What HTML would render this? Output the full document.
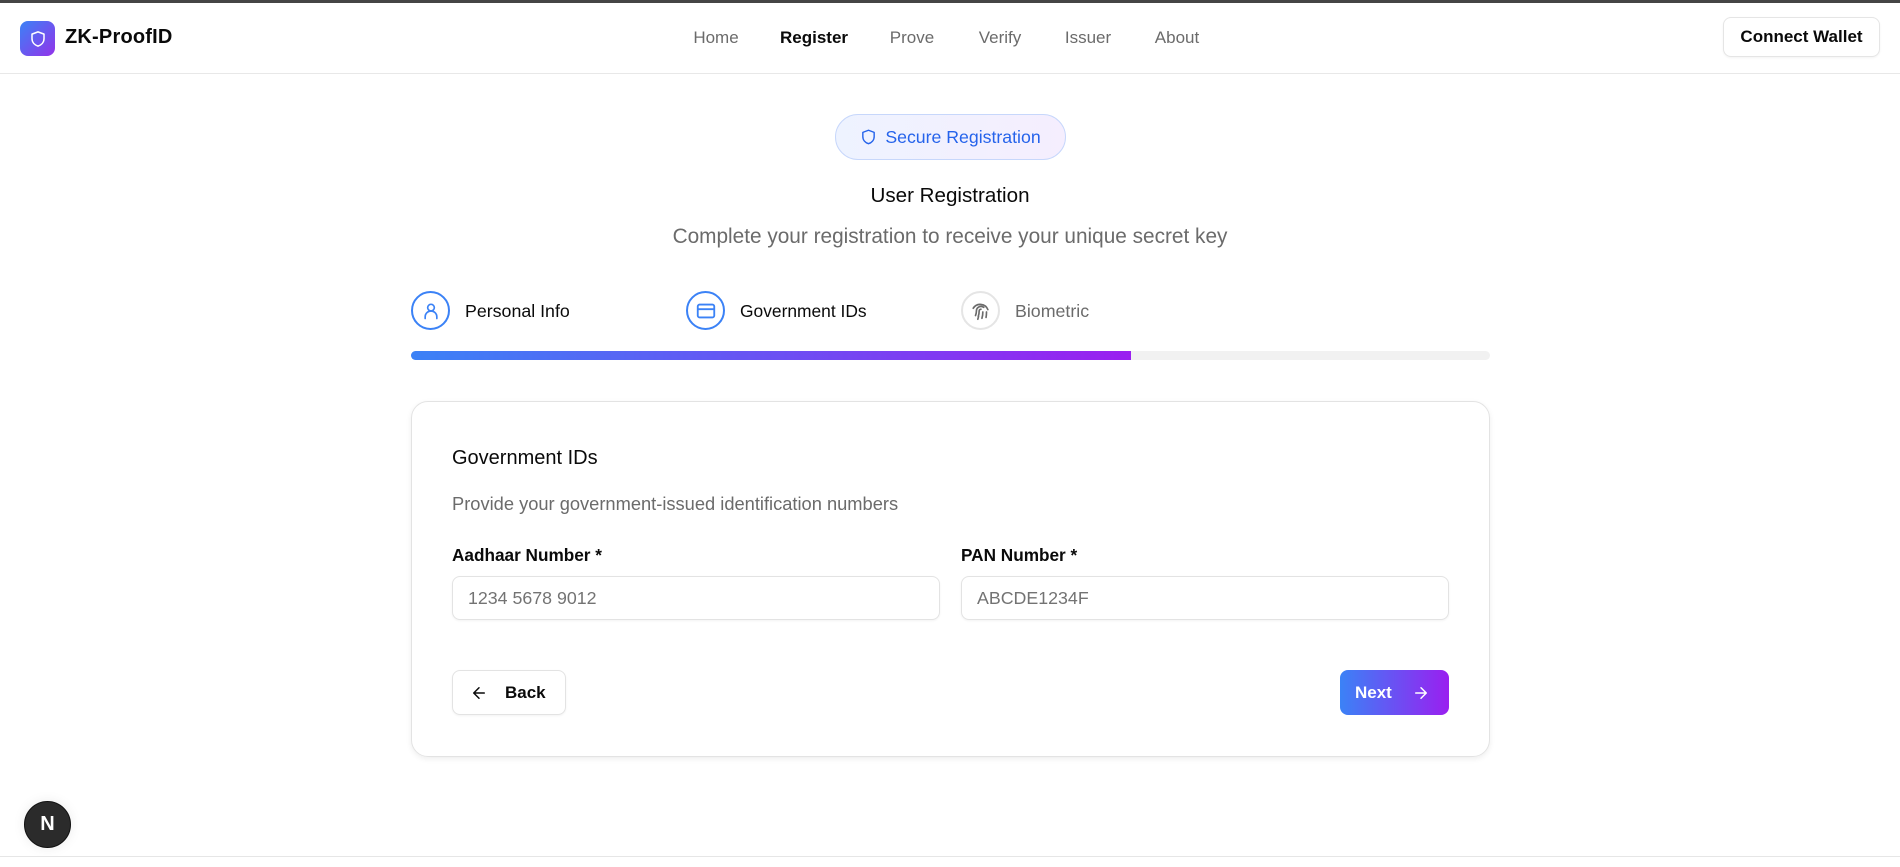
<!DOCTYPE html>
<html><head><meta charset="utf-8"><style>
*{box-sizing:border-box;margin:0;padding:0}
body{width:1900px;height:867px;overflow:hidden;background:#fff;font-family:"Liberation Sans",sans-serif;color:#0a0a0a;position:relative}
.abs{position:absolute}
.topbar{left:0;top:0;width:1900px;height:3px;background:#454545}
.hdr{left:0;top:3px;width:1900px;height:71px;border-bottom:1px solid #e8e8e8}
.logo{left:20px;top:21px;width:35px;height:35px;border-radius:8px;background:linear-gradient(135deg,#3b82f6,#9333ea);display:flex;align-items:center;justify-content:center}
.brand{left:65px;top:26px;font-size:20px;font-weight:700;letter-spacing:.2px}
.nav{top:28px;font-size:17px;color:#6b6b6b;transform:translateX(-50%)}
.cw{left:1723px;top:17px;width:157px;height:40px;border:1px solid #e5e5e5;border-radius:8px;font-size:17px;font-weight:700;display:flex;align-items:center;justify-content:center;box-shadow:0 1px 2px rgba(0,0,0,.05)}
.badge{left:835px;top:114px;width:231px;height:46px;border-radius:23px;border:1px solid #c7d7fb;background:linear-gradient(90deg,#eef3ff,#f5eefe);display:flex;align-items:center;justify-content:center;gap:8px;color:#2563eb;font-size:17.7px}
.center{left:0;width:1900px;text-align:center}
.circ{width:39px;height:39px;border-radius:50%;border:2px solid #3b82f6;display:flex;align-items:center;justify-content:center;top:291px}
.slab{top:301px;font-size:17.8px}
.card{left:411px;top:401px;width:1079px;height:356px;border:1px solid #e3e3e3;border-radius:17px;box-shadow:0 2px 6px rgba(0,0,0,.07)}
.inp{top:576px;width:488px;height:44px;border:1px solid #e3e3e3;border-radius:8px;box-shadow:0 1px 2px rgba(0,0,0,.05);font-size:17.8px;color:#737373;padding:11px 0 0 15px}
.lbl{top:545px;font-size:17.2px;font-weight:700}
</style></head><body>
<div class="abs topbar"></div>
<div class="abs hdr"></div>
<div class="abs logo"><svg width="18" height="20" viewBox="0 0 24 24" fill="none" stroke="#fff" stroke-width="2" stroke-linejoin="round"><path d="M12 2.5l8 3v6c0 5-3.5 8.5-8 10-4.5-1.5-8-5-8-10v-6z"/></svg></div>
<div class="abs brand">ZK-ProofID</div>
<div class="abs nav" style="left:716px">Home</div>
<div class="abs nav" style="left:814px;color:#0a0a0a;font-weight:600">Register</div>
<div class="abs nav" style="left:912px">Prove</div>
<div class="abs nav" style="left:1000px">Verify</div>
<div class="abs nav" style="left:1088px">Issuer</div>
<div class="abs nav" style="left:1177px">About</div>
<div class="abs cw">Connect Wallet</div>

<div class="abs badge"><svg width="17" height="18" viewBox="0 0 24 24" fill="none" stroke="#2563eb" stroke-width="2" stroke-linejoin="round"><path d="M12 2.5l8 3v6c0 5-3.5 8.5-8 10-4.5-1.5-8-5-8-10v-6z"/></svg>Secure Registration</div>
<div class="abs center" style="top:184px;font-size:20.6px;font-weight:500">User Registration</div>
<div class="abs center" style="top:225px;font-size:20.8px;color:#6b6b6b">Complete your registration to receive your unique secret key</div>

<div class="abs circ" style="left:411px"><svg width="20" height="20" viewBox="0 0 24 24" fill="none" stroke="#3b82f6" stroke-width="2" stroke-linecap="round"><circle cx="12" cy="8" r="4"/><path d="M5 21v-2a7 7 0 0 1 14 0v2"/></svg></div>
<div class="abs slab" style="left:465px">Personal Info</div>
<div class="abs circ" style="left:686px"><svg width="22" height="22" viewBox="0 0 24 24" fill="none" stroke="#3b82f6" stroke-width="2"><rect x="3" y="5" width="18" height="14" rx="2"/><path d="M3 10h18"/></svg></div>
<div class="abs slab" style="left:740px;font-size:17.4px">Government IDs</div>
<div class="abs circ" style="left:961px;border-color:#e5e5e5"><svg width="22" height="22" viewBox="0 0 24 24" fill="none" stroke="#6b6b6b" stroke-width="1.8" stroke-linecap="round"><path d="M12 10a2 2 0 0 0-2 2c0 2-.3 4-1 6"/><path d="M14 13c0 2.5-.3 5-1 7"/><path d="M17.5 19c.3-1.5.5-4 .5-6"/><path d="M6 17c.6-1.5 1-3 1-5a5 5 0 0 1 8-4"/><path d="M3.5 9a9 9 0 0 1 16 1.5"/><path d="M8.5 21c.3-1 .6-2 .8-3"/></svg></div>
<div class="abs slab" style="left:1015px;color:#6b6b6b">Biometric</div>

<div class="abs" style="left:411px;top:351px;width:1079px;height:9px;border-radius:5px;background:#f1f1f1"></div>
<div class="abs" style="left:411px;top:351px;width:720px;height:9px;border-radius:5px 0 0 5px;background:linear-gradient(90deg,#3b82f6,#9a1ff0)"></div>

<div class="abs card"></div>
<div class="abs" style="left:452px;top:447px;font-size:20px">Government IDs</div>
<div class="abs" style="left:452px;top:493px;font-size:18.3px;color:#6b6b6b">Provide your government-issued identification numbers</div>
<div class="abs lbl" style="left:452px">Aadhaar Number *</div>
<div class="abs lbl" style="left:961px">PAN Number *</div>
<div class="abs inp" style="left:452px">1234 5678 9012</div>
<div class="abs inp" style="left:961px">ABCDE1234F</div>
<div class="abs" style="left:452px;top:670px;width:114px;height:45px;border:1px solid #e3e3e3;border-radius:8px;box-shadow:0 1px 2px rgba(0,0,0,.05);display:flex;align-items:center;padding-left:17px;gap:17px;font-size:17px;font-weight:600"><svg width="18" height="18" viewBox="0 0 24 24" fill="none" stroke="#0a0a0a" stroke-width="2" stroke-linecap="round" stroke-linejoin="round"><path d="M19 12H5M12 19l-7-7 7-7"/></svg>Back</div>
<div class="abs" style="left:1340px;top:670px;width:109px;height:45px;border-radius:8px;background:linear-gradient(90deg,#3b82f6,#9a1ff0);display:flex;align-items:center;padding-left:15px;gap:20px;font-size:17px;font-weight:700;color:#fff">Next<svg width="18" height="18" viewBox="0 0 24 24" fill="none" stroke="#fff" stroke-width="2" stroke-linecap="round" stroke-linejoin="round"><path d="M5 12h14M12 5l7 7-7 7"/></svg></div>

<div class="abs" style="left:24px;top:801px;width:47px;height:47px;border-radius:50%;background:#2b2b2b;border:1.5px solid #111;box-shadow:0 0 12px rgba(0,0,0,.08);color:#fff;font-size:20px;font-weight:600;display:flex;align-items:center;justify-content:center">N</div>
<div class="abs" style="left:0;top:856px;width:1900px;height:1px;background:#e6e6e6"></div>
</body></html>
